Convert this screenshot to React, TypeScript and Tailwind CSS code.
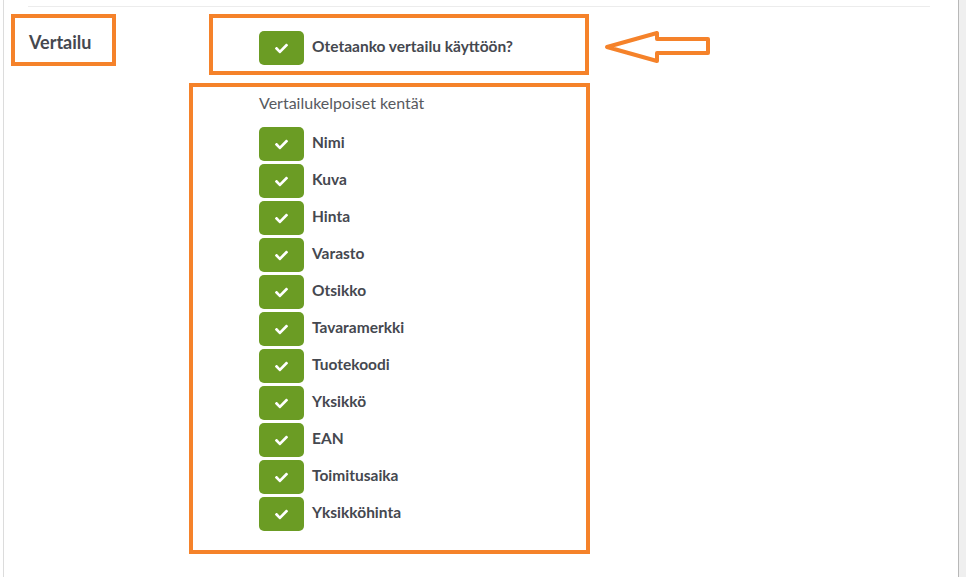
import { FaCheck } from "react-icons/fa";

const fields = [
    "Nimi",
    "Kuva",
    "Hinta",
    "Varasto",
    "Otsikko",
    "Tavaramerkki",
    "Tuotekoodi",
    "Yksikkö",
    "EAN",
    "Toimitusaika",
    "Yksikköhinta",
];

const Box = () => (
    <span className="flex h-[34px] w-[45px] shrink-0 items-center justify-center rounded-[5px] bg-[#6b9c24]">
        <FaCheck className="text-white" size={13} />
    </span>
);

const Row = ({ label }: { label: string }) => (
    <div className="flex items-center gap-[8px]">
        <Box />
        <span className="pb-[3px] text-[15.5px] font-bold text-[#45484f]">{label}</span>
    </div>
);

const App = () => {
    return (
        <div className="flex h-[577px] w-[966px] overflow-hidden bg-white font-['Lato',sans-serif]">
            <div className="w-[3px]" />
            <div className="w-px bg-[#dcdcdc]" />
            <div className="flex-1">
                <div className="ml-[24px] mt-[6px] h-px w-[902px] bg-[#ececec]" />
                <div className="mt-[7px] flex items-start">
                    <div className="ml-[7px] flex h-[52px] w-[105px] items-center border-4 border-[#f5822a] pl-[14px] pt-[4px]">
                        <span className="text-[18px] font-bold text-[#45484f]">Vertailu</span>
                    </div>
                    <div className="ml-[93px] flex h-[61px] w-[380px] items-start border-4 border-[#f5822a] pl-[46px] pt-[13px]">
                        <Row label="Otetaanko vertailu käyttöön?" />
                    </div>
                    <svg className="ml-[14px] mt-[16px]" width="108" height="34" viewBox="0 0 108 34">
                        <polygon
                            points="4,17 54,3 54,9 105,9 105,23 54,23 54,31"
                            fill="none"
                            stroke="#f5822a"
                            strokeWidth="4"
                            strokeLinejoin="round"
                        />
                    </svg>
                </div>
                <div className="ml-[185px] mt-[8px] h-[471px] w-[401px] border-4 border-[#f5822a] pl-[66px] pt-[6px]">
                    <p className="text-[16px] leading-5 text-[#575a60]">Vertailukelpoiset kentät</p>
                    <div className="mt-[14px] flex flex-col gap-[3px]">
                        {fields.map((f) => (
                            <Row key={f} label={f} />
                        ))}
                    </div>
                </div>
            </div>
            <div className="w-px bg-[#b8b8b8]" />
            <div className="w-[7px] bg-[#efefef]" />
        </div>
    );
};

export default App;
